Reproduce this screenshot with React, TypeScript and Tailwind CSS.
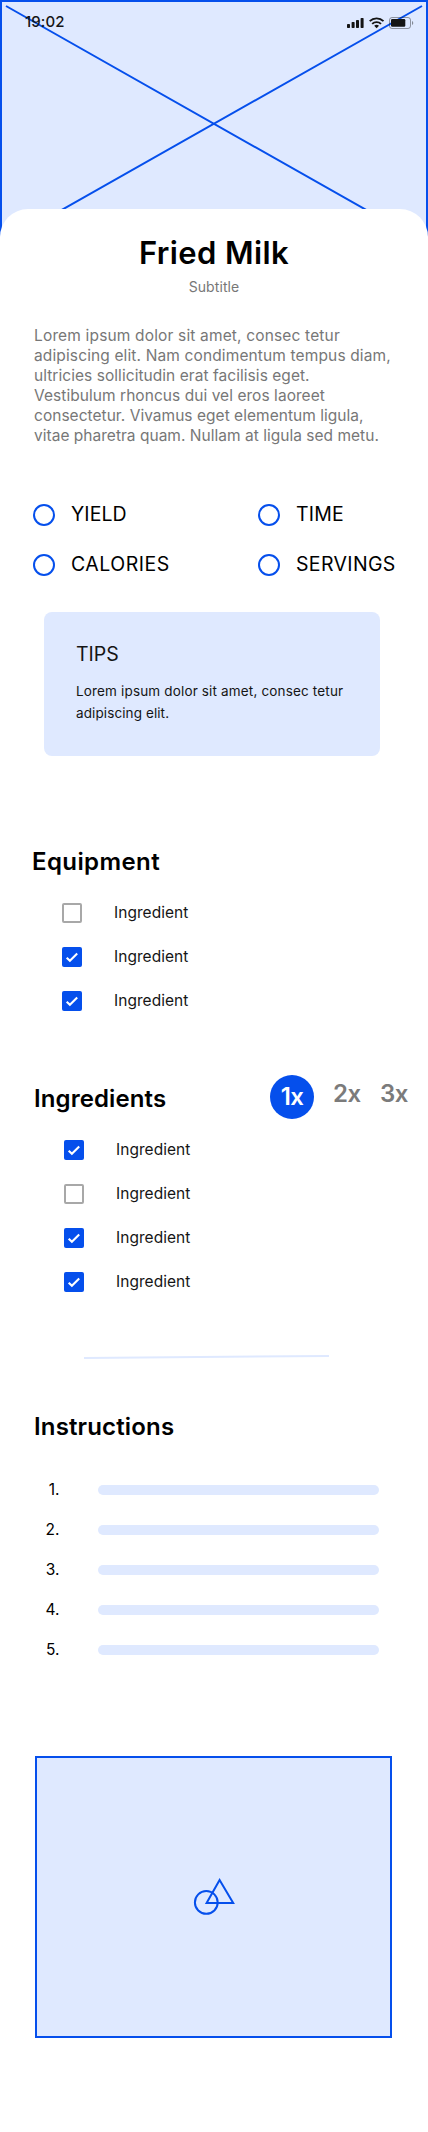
import { clsx } from "clsx";

const paragraph = [
  { text: "Lorem ipsum dolor sit amet, consec tetur", tracking: "tracking-[0.16px]" },
  { text: "adipiscing elit. Nam condimentum tempus diam,", tracking: "tracking-[0.13px]" },
  { text: "ultricies sollicitudin erat facilisis eget.", tracking: "tracking-[0.05px]" },
  { text: "Vestibulum rhoncus dui vel eros laoreet", tracking: "tracking-[0.05px]" },
  { text: "consectetur. Vivamus eget elementum ligula,", tracking: "tracking-[0.03px]" },
  { text: "vitae pharetra quam. Nullam at ligula sed metu.", tracking: "tracking-[0.02px]" },
];

const facts = [
  { label: "YIELD", tracking: "tracking-[0.1px]" },
  { label: "TIME", tracking: "tracking-[0.2px]" },
  { label: "CALORIES", tracking: "tracking-[0.5px]" },
  { label: "SERVINGS", tracking: "tracking-[0.35px]" },
];

function StatusIcons() {
  return (
    <svg width="68" height="14" viewBox="0 0 68 14" fill="none">
      <g fill="#151515">
        <rect x="1" y="8" width="3" height="4" rx="0.7" />
        <rect x="5.6" y="6" width="3" height="6" rx="0.7" />
        <rect x="10" y="4" width="3" height="8" rx="0.7" />
        <rect x="14.6" y="2" width="3" height="10" rx="0.7" />
      </g>
      <g stroke="#151515" strokeWidth="1.9">
        <path d="M23.7 5.1a10 10 0 0 1 13.8 0" />
        <path d="M26.2 7.9a6.4 6.4 0 0 1 8.8 0" />
      </g>
      <path d="M28.2 9.7a3.6 3.6 0 0 1 4.8 0l-2.4 2.5z" fill="#151515" />
      <rect x="43.5" y="1.5" width="21" height="11" rx="2.5" stroke="#151515" strokeOpacity="0.4" />
      <rect x="45" y="3" width="14.3" height="7.7" rx="1.2" fill="#151515" />
      <path d="M66 5v4a2.2 2.2 0 0 0 0-4z" fill="#151515" fillOpacity="0.45" />
    </svg>
  );
}

function Hero() {
  return (
    <header className="relative h-[237px] border-2 border-b-0 border-[#054fec] bg-[#dfe9ff]">
      <svg className="absolute -left-0.5 -top-0.5" width="428" height="237" viewBox="0 0 428 237">
        <path d="M6 6 422 241.5M422 6 6 241.5" stroke="#054fec" strokeWidth="2" />
      </svg>
      <div className="relative flex items-start justify-between pl-[23px] pr-[12px] pt-[11px]">
        <span className="text-[15px] font-medium leading-[18px] tracking-[0.1px] text-[#151515]">19:02</span>
        <div className="pt-[3px]">
          <StatusIcons />
        </div>
      </div>
    </header>
  );
}

function Checkbox({ checked }: { checked: boolean }) {
  if (!checked) return <span className="size-5 rounded-xs border-2 border-[#a8a8a8]" />;
  return (
    <span className="size-5 rounded-xs bg-[#054fec]">
      <svg width="20" height="20" viewBox="0 0 20 20" fill="none">
        <path d="M4.7 10.7 7.9 13.7 15.2 6.6" stroke="#fff" strokeWidth="2.1" />
      </svg>
    </span>
  );
}

function CheckList({ items, className }: { items: boolean[]; className: string }) {
  return (
    <ul className={clsx("flex flex-col gap-6", className)}>
      {items.map((checked, i) => (
        <li key={i} className="flex h-5 gap-8">
          <Checkbox checked={checked} />
          <span className="text-[15.5px] leading-5 tracking-[0.05px] text-[#151515]">Ingredient</span>
        </li>
      ))}
    </ul>
  );
}

const heading = "text-[24px] font-semibold leading-[29px]";

export default function App() {
  return (
    <div className="h-[2132px] w-[428px] overflow-hidden bg-white font-['Inter',sans-serif] text-black">
      <Hero />
      <main className="relative -mt-7 rounded-t-[28px] bg-white pt-6">
        <h1 className="text-center text-[31px] font-semibold leading-10 tracking-[0.4px]">Fried Milk</h1>
        <p className="mt-1 text-center text-sm leading-5 tracking-[0.1px] text-[#777]">Subtitle</p>

        <p className="ml-[34px] mt-[29px] text-[15.5px] leading-5 text-[#777]">
          {paragraph.map((l) => (
            <span key={l.text} className={clsx("block whitespace-nowrap", l.tracking)}>
              {l.text}
            </span>
          ))}
        </p>

        <ul className="ml-[33px] mt-14 grid grid-cols-[225px_1fr] gap-y-[26px]">
          {facts.map((f) => (
            <li key={f.label} className="flex h-6 items-start gap-4">
              <span className="mt-0.5 size-[22px] rounded-full border-2 border-[#054fec]" />
              <span className={clsx("text-[19.5px] leading-6", f.tracking)}>{f.label}</span>
            </li>
          ))}
        </ul>

        <section className="ml-11 mt-9 h-36 w-[336px] rounded-lg bg-[#dfe9ff] pl-8 pt-[30px] text-[#151515]">
          <h2 className="text-[19.5px] leading-6">TIPS</h2>
          <p className="mt-3.5 whitespace-nowrap text-[13.5px] leading-[22px]">
            <span className="block tracking-[0.16px]">Lorem ipsum dolor sit amet, consec tetur</span>
            <span className="block tracking-[0.1px]">adipiscing elit.</span>
          </p>
        </section>

        <section className="mt-[91px]">
          <h2 className={clsx(heading, "ml-8 tracking-[0.4px]")}>Equipment</h2>
          <CheckList items={[false, true, true]} className="ml-[62px] mt-[27px]" />
        </section>

        <section className="mt-16">
          <div className="flex h-11 items-start pl-[34px]">
            <h2 className={clsx(heading, "mt-[9px] w-[236px] tracking-[0.1px]")}>Ingredients</h2>
            <div className="flex">
              <span className={clsx(heading, "size-11 rounded-full bg-[#054fec] pt-[7px] text-center tracking-[-0.7px] text-white")}>
                1x
              </span>
              <span className={clsx(heading, "ml-[19px] mt-1 w-[47px] tracking-[-0.5px] text-[#7b7b7b]")}>2x</span>
              <span className={clsx(heading, "mt-1 tracking-[-0.5px] text-[#7b7b7b]")}>3x</span>
            </div>
          </div>
          <CheckList items={[true, false, true, true]} className="ml-16 mt-[21px]" />
        </section>

        <svg className="ml-[84px] mt-[62px] block" width="245" height="6" viewBox="0 0 245 6">
          <path d="M0 4 245 2" stroke="#dfe9ff" strokeWidth="2" />
        </svg>

        <section className="mt-[52px]">
          <h2 className={clsx(heading, "ml-[34px] tracking-[0.15px]")}>Instructions</h2>
          <ol className="mt-[39px] flex flex-col gap-5">
            {[1, 2, 3, 4, 5].map((n) => (
              <li key={n} className="flex h-5 items-center">
                <span className="w-[59.5px] text-right text-[15.5px] leading-5">{n}.</span>
                <span className="ml-[38.5px] h-2.5 w-[281px] rounded-full bg-[#dfe9ff]" />
              </li>
            ))}
          </ol>
        </section>

        <figure className="ml-[35px] mt-24 h-[282px] w-[357px] border-2 border-[#054fec] bg-[#dfe9ff]">
          <svg width="353" height="278" viewBox="37 1758 353 278" fill="none" stroke="#054fec" strokeWidth="2">
            <circle cx="206.3" cy="1902.4" r="11.4" />
            <path d="M219.6 1880 233.2 1903H206.6Z" />
          </svg>
        </figure>
      </main>
    </div>
  );
}
